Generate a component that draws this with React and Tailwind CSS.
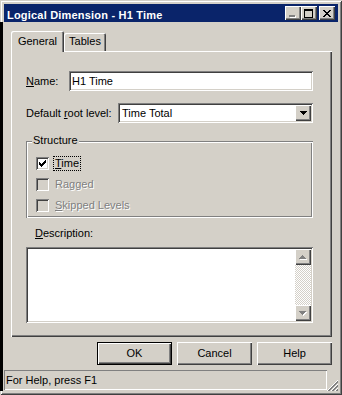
import React from "react";

const raised = "shadow-[inset_1px_1px_0_#fff,inset_-1px_-1px_0_#404040,inset_-2px_-2px_0_#808080]";
const sunken = "shadow-[inset_1px_1px_0_#808080,inset_-1px_-1px_0_#fff,inset_2px_2px_0_#404040,inset_-2px_-2px_0_#d4d0c8]";
const etched = "shadow-[inset_1px_1px_0_#808080,inset_-1px_-1px_0_#fff,inset_2px_2px_0_#fff,inset_-2px_-2px_0_#808080]";
const disabledText = "text-[#808080] [text-shadow:1px_1px_0_#fff]";

// tiny pixel glyphs, one string per row, '#' = filled
function Pix({ rows, color = "#000", shadow }) {
  const w = rows[0].length;
  const h = rows.length;
  const cells = [];
  rows.forEach((r, y) =>
    r.split("").forEach((c, x) => {
      if (c === "#") cells.push([x, y]);
    })
  );
  return (
    <svg width={w + (shadow ? 1 : 0)} height={h + (shadow ? 1 : 0)} shapeRendering="crispEdges">
      {shadow && cells.map(([x, y]) => <rect key={"s" + x + "-" + y} x={x + 1} y={y + 1} width="1" height="1" fill={shadow} />)}
      {cells.map(([x, y]) => <rect key={x + "-" + y} x={x} y={y} width="1" height="1" fill={color} />)}
    </svg>
  );
}

const CLOSE = ["##....##", ".##..##.", "..####..", "...##...", "..####..", ".##..##.", "##....##"];
const MAX = ["#########", "#########", "#.......#", "#.......#", "#.......#", "#.......#", "#.......#", "#.......#", "#########"];
const MIN = ["######", "######"];
const DOWN = ["#######", ".#####.", "..###..", "...#..."];
const UP = ["...#...", "..###..", ".#####.", "#######"];
const CHECK = ["......#", ".....##", "#...###", "##.###.", "#####..", ".###...", "..#...."];

function Grip() {
  const px = [];
  for (let i = 0; i < 11; i++)
    for (let j = 0; j < 11; j++) {
      const s = i + j;
      if ([10, 14, 18].includes(s)) px.push(<rect key={i + "-" + j} x={i} y={j} width="1" height="1" fill="#fff" />);
      if ([11, 12, 15, 16, 19, 20].includes(s)) px.push(<rect key={i + "-" + j} x={i} y={j} width="1" height="1" fill="#808080" />);
    }
  return (
    <svg width="11" height="11" shapeRendering="crispEdges">
      {px}
    </svg>
  );
}

function TitleButton({ children, className = "" }) {
  return (
    <div className={`w-[16px] h-[14px] bg-[#d4d0c8] flex items-center justify-center ${raised} ${className}`}>
      {children}
    </div>
  );
}

function TitleBar() {
  return (
    <div className="h-[18px] bg-[#0a246a] flex pl-[3px] pr-[3px]">
      <div className="flex-1 pt-[5px] leading-[13px] text-white font-bold tracking-[0.2px]">Logical Dimension - H1 Time</div>
      <div className="flex items-center">
        <TitleButton>
          <div className="mt-[7px] ml-[-1px]">
            <Pix rows={MIN} color="#808080" shadow="#fff" />
          </div>
        </TitleButton>
        <TitleButton>
          <div className="ml-[-1px]">
            <Pix rows={MAX} />
          </div>
        </TitleButton>
        <TitleButton className="ml-[2px]">
          <div className="ml-[-1px]">
            <Pix rows={CLOSE} />
          </div>
        </TitleButton>
      </div>
    </div>
  );
}

function Checkbox({ label, mnemonic, checked, disabled, focused }) {
  const rest = label.slice(1);
  return (
    <div className="flex items-center h-[13px]">
      <div className={`w-[13px] h-[13px] flex items-center justify-center ${sunken} ${disabled ? "bg-[#d4d0c8]" : "bg-white"}`}>
        {checked && <Pix rows={CHECK} />}
      </div>
      <span
        className={`ml-[4px] px-[1px] leading-[13px] border border-dotted ${focused ? "border-black" : "border-transparent"} ${
          disabled ? disabledText : ""
        }`}
      >
        {mnemonic ? <span className="underline underline-offset-[1px]">{label[0]}</span> : label[0]}
        {rest}
      </span>
    </div>
  );
}

function DialogButton({ children, isDefault }) {
  if (isDefault) {
    return (
      <div className="w-[75px] h-[23px] border border-black">
        <div className={`w-full h-full flex items-center justify-center ${raised}`}>{children}</div>
      </div>
    );
  }
  return <div className={`w-[75px] h-[23px] flex items-center justify-center ${raised}`}>{children}</div>;
}

export default function App() {
  return (
    <div className="relative w-[342px] h-[395px] bg-[#d4d0c8] p-[4px] flex flex-col font-['Liberation_Sans',Arial,sans-serif] text-[11px] leading-[13px] text-black shadow-[inset_1px_1px_0_#d4d0c8,inset_-1px_-1px_0_#404040,inset_2px_2px_0_#fff,inset_-2px_-2px_0_#808080]">
      <div className="absolute left-0 top-[22px] w-[3px] h-[369px] bg-black" />
      <TitleBar />

      <div className="flex-1 flex flex-col">
        <div className="pt-[9px] pl-[7px] pr-[6px]">
          {/* tabs */}
          <div className="flex items-end h-[20px]">
            <div
              className={`relative z-10 w-[53px] h-[21px] mb-[-1px] bg-[#d4d0c8] rounded-t-[2px] pt-[4px] text-center shadow-[inset_1px_1px_0_#fff,inset_-1px_0_0_#404040,inset_-2px_0_0_#808080]`}
            >
              General
            </div>
            <div className="w-[42px] h-[18px] bg-[#d4d0c8] rounded-t-[2px] pt-[2px] text-center shadow-[inset_1px_1px_0_#fff,inset_-1px_0_0_#404040,inset_-2px_0_0_#808080]">
              Tables
            </div>
          </div>

          {/* panel */}
          <div className="h-[286px] flex flex-col pt-[20px] pl-[15px] pr-[19px] shadow-[inset_1px_1px_0_#fff,inset_-1px_-1px_0_#404040,inset_-2px_-2px_0_#808080]">
            <div className="flex items-center h-[20px]">
              <div className="w-[43px]">
                <span className="underline underline-offset-[1px]">N</span>ame:
              </div>
              <div className={`w-[244px] h-[20px] bg-white flex items-center pl-[3px] ${sunken}`}>H1 Time</div>
            </div>

            <div className="mt-[12px] flex items-center h-[20px]">
              <div className="w-[92px]">
                Default <span className="underline underline-offset-[1px]">r</span>oot level:
              </div>
              <div className={`w-[195px] h-[20px] bg-white flex items-center p-[2px] ${sunken}`}>
                <div className="flex-1 pl-[2px]">Time Total</div>
                <div className={`w-[16px] h-[16px] bg-[#d4d0c8] flex items-center justify-center ${raised}`}>
                  <Pix rows={DOWN} />
                </div>
              </div>
            </div>

            <div className={`relative mt-[18px] h-[77px] flex flex-col gap-[8px] pl-[10px] pt-[16px] ${etched}`}>
              <span className="absolute left-[6px] top-[-7px] px-[1px] bg-[#d4d0c8]">Structure</span>
              <Checkbox label="Time" mnemonic checked focused />
              <Checkbox label="Ragged" disabled />
              <Checkbox label="Skipped Levels" mnemonic disabled />
            </div>

            <div className="mt-[9px] pl-[9px] h-[13px]">
              <span className="underline underline-offset-[1px]">D</span>escription:
            </div>

            <div className={`mt-[7px] h-[76px] bg-white p-[2px] flex justify-end ${sunken}`}>
              <div className="w-[16px] flex flex-col">
                <div className={`h-[16px] bg-[#d4d0c8] flex items-center justify-center ${raised}`}>
                  <Pix rows={UP} color="#808080" shadow="#fff" />
                </div>
                <div className="flex-1 bg-[image:repeating-conic-gradient(#fff_0_25%,#d4d0c8_0_50%)] bg-[length:2px_2px]" />
                <div className={`h-[16px] bg-[#d4d0c8] flex items-center justify-center ${raised}`}>
                  <Pix rows={DOWN} color="#808080" shadow="#fff" />
                </div>
              </div>
            </div>
          </div>
        </div>

        <div className="mt-[5px] h-[23px] flex justify-end gap-[5px] pr-[6px]">
          <DialogButton isDefault>OK</DialogButton>
          <DialogButton>Cancel</DialogButton>
          <DialogButton>Help</DialogButton>
        </div>

        <div className="mt-[5px] h-[21px] flex">
          <div className="w-[323px] h-[20px] flex items-center pl-[2px] shadow-[inset_1px_1px_0_#808080,inset_-1px_-1px_0_#fff]">
            For Help, press F1
          </div>
          <div className="self-end">
            <Grip />
          </div>
        </div>
      </div>
    </div>
  );
}
